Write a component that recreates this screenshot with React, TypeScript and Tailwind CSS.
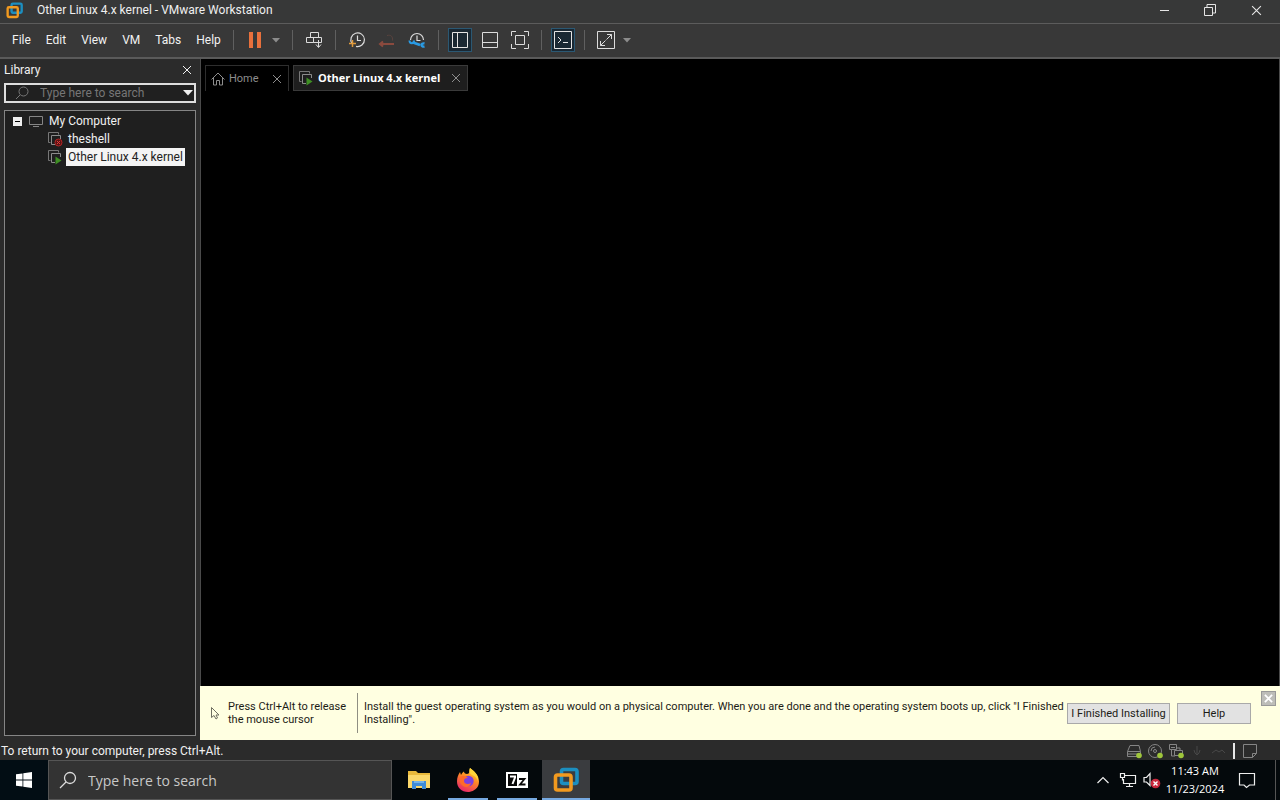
import type { ReactNode } from "react";

const ui = "font-['Roboto','Open_Sans',sans-serif]";

function VmwareLogo({ className }: { className: string }) {
  return (
    <svg viewBox="0 0 26 26" className={className} fill="none" strokeWidth="3.600" aria-hidden="true">
      <rect x="8.500" y="2.500" width="15.500" height="14" rx="2" stroke="#1c8fc0" />
      <rect x="2.500" y="8" width="15.500" height="15" rx="2" stroke="#f29a1f" />
      <path d="M8.500 11v3.500a2 2 0 0 0 2 2h4" stroke="#1c8fc0" strokeWidth="2" />
    </svg>
  );
}

function Separator() {
  return <div className="h-5 w-px shrink-0 bg-[#606060]" />;
}

function Tool({ label, active = false, children }: { label: string; active?: boolean; children: ReactNode }) {
  return (
    <button
      aria-label={label}
      className={
        active
          ? "flex size-6 shrink-0 items-center justify-center border border-[#2b5873] bg-[#1a2833] text-[#e4e4e4]"
          : "flex size-6 shrink-0 items-center justify-center text-[#dcdcdc]"
      }
    >
      {children}
    </button>
  );
}

function ToolGroup({ children }: { children: ReactNode }) {
  return <div className="flex shrink-0 items-center gap-1.5 px-[9px]">{children}</div>;
}

function Icon({ children }: { children: ReactNode }) {
  return (
    <svg viewBox="0 0 18 18" className="size-[18px] shrink-0" fill="none" stroke="currentColor" aria-hidden="true">
      {children}
    </svg>
  );
}

function Caret({ label }: { label: string }) {
  return (
    <button aria-label={label} className="-ml-1 flex h-6 w-3.5 items-center justify-center">
      <svg viewBox="0 0 8 5" className="h-[5px] w-2" fill="#8c8c8c" aria-hidden="true">
        <path d="M0 0h8L4 4.500z" />
      </svg>
    </button>
  );
}

function Cross({ className }: { className: string }) {
  return (
    <svg viewBox="0 0 10 10" className={className} fill="none" stroke="currentColor" aria-hidden="true">
      <path d="M1 1l8 8M9 1L1 9" />
    </svg>
  );
}

function MachineIcon({ running }: { running: boolean }) {
  return (
    <svg viewBox="0 0 16 16" className="size-4 shrink-0" fill="none" aria-hidden="true">
      <path d="M3.500 11.500h-2v-10h10v2" stroke="#777" />
      <path d="M8 13.500H4.500v-9h9V8" stroke="#8c8c8c" />
      {running ? (
        <path d="M8.500 7.500v8l6-4z" fill="#3f8f24" />
      ) : (
        <>
          <circle cx="11.500" cy="11.500" r="3.500" fill="#5a1414" stroke="#b32525" />
          <path d="M10 10l3 3M13 10l-3 3" stroke="#e23b3b" />
        </>
      )}
    </svg>
  );
}

function TitleBar() {
  return (
    <header className="flex h-6 shrink-0 items-start border-b border-[#5c5c5c] bg-[#373838]">
      <div className="flex h-5 min-w-0 flex-1 items-center gap-3.5 pl-1.5">
        <VmwareLogo className="size-[17px]" />
        <h1 className="truncate text-[12px] leading-4 text-[#f0f0f0]">Other Linux 4.x kernel - VMware Workstation</h1>
      </div>
      <div className="flex h-5 text-[#e6e6e6]">
        <button aria-label="Minimize" className="flex w-[46px] items-center justify-center">
          <span className="h-px w-[9px] bg-[#e6e6e6]" />
        </button>
        <button aria-label="Restore" className="flex w-[46px] items-center justify-center">
          <svg viewBox="0 0 12 12" className="size-3" fill="none" stroke="currentColor" aria-hidden="true">
            <path d="M.5 3.500h8v8h-8zM3 3V.5h8.500V9H9" />
          </svg>
        </button>
        <button aria-label="Close" className="flex w-[47px] items-center justify-center">
          <Cross className="size-[11px]" />
        </button>
      </div>
    </header>
  );
}

function Toolbar() {
  return (
    <div className="flex h-[35px] shrink-0 items-center border-b-2 border-[#5a5a5a] bg-[#383838] pb-px">
      <nav aria-label="Main menu" className="flex w-[233px] shrink-0 items-center gap-[15px] pl-3 text-[12px] leading-4 text-[#f2f2f2]">
        {["File", "Edit", "View", "VM", "Tabs", "Help"].map((name) => (
          <button key={name}>{name}</button>
        ))}
      </nav>
      <Separator />
      <ToolGroup>
        <Tool label="Suspend">
          <svg viewBox="0 0 14 16" className="h-4 w-3.5" fill="#e8703c" aria-hidden="true">
            <path d="M1 0h4v16H1zM9 0h4v16H9z" />
          </svg>
        </Tool>
        <Caret label="Power options" />
      </ToolGroup>
      <Separator />
      <ToolGroup>
        <Tool label="Send Ctrl+Alt+Del">
          <Icon>
            <path d="M5.500 1.500h8v5h-8zM1.500 6.500h7v5h-7zM8.500 6.500h8v5h-8zM13.500 9v7M11 13.500l2.500 3 2.500-3" />
          </Icon>
        </Tool>
      </ToolGroup>
      <Separator />
      <ToolGroup>
        <Tool label="Take snapshot">
          <Icon>
            <path d="M4 12.500A6.800 6.800 0 1 1 8 15.300M9.500 4.500v5H13" strokeWidth="1.200" />
            <path d="M4.500 9v7M1 12.500h7" stroke="#e09a3c" strokeWidth="1.500" />
          </Icon>
        </Tool>
        <Tool label="Revert snapshot">
          <Icon>
            <path d="M9 4.500c4-1 6 1 5.500 5" stroke="#59433e" />
            <path d="M5 10.500L2 13l3 2.500M2 13h14" stroke="#8a4a3e" strokeWidth="2" />
          </Icon>
        </Tool>
        <Tool label="Manage snapshots">
          <Icon>
            <path d="M2.500 9a6.500 6.500 0 1 1 13 0M9 4.500v5h3.500" strokeWidth="1.200" />
            <path d="M1.500 9.500c0 3.500 4.500 3.500 4.500 0" stroke="#2a9be4" strokeWidth="2" />
            <path d="M5 11.500l7 2.500M16.500 12.500c-4-1-4 4 0 3" stroke="#2a9be4" strokeWidth="2.400" />
          </Icon>
        </Tool>
      </ToolGroup>
      <Separator />
      <ToolGroup>
        <Tool label="Show library" active>
          <Icon>
            <path d="M1.500 1.500h15v15h-15zM6.500 1.500v15" />
          </Icon>
        </Tool>
        <Tool label="Show thumbnail bar">
          <Icon>
            <path d="M1.500 1.500h15v15h-15zM1.500 11.500h15" />
          </Icon>
        </Tool>
        <Tool label="Full screen">
          <Icon>
            <path d="M.5 5V.5H5M13 .5h4.500V5M17.500 13v4.500H13M5 17.500H.5V13M4.500 4.500h9v9h-9z" />
          </Icon>
        </Tool>
      </ToolGroup>
      <Separator />
      <ToolGroup>
        <Tool label="Console view" active>
          <Icon>
            <path d="M.5 .5h17v17H.5zM4 6l3 3-3 3M9 11.500h5" />
          </Icon>
        </Tool>
      </ToolGroup>
      <Separator />
      <ToolGroup>
        <Tool label="Stretch guest">
          <Icon>
            <path d="M.5 .5h17v17H.5z" />
            <path d="M10 3.500h4.500V8M14.500 3.500l-5 5M3.500 10v4.500H8M3.500 14.500l5-5" />
          </Icon>
        </Tool>
        <Caret label="Stretch options" />
      </ToolGroup>
    </div>
  );
}

function Library() {
  return (
    <aside className="flex w-[200px] shrink-0 flex-col bg-[#2b2b2b] px-1 pb-1 text-[12px] leading-[18px] text-[#f0f0f0]">
      <div className="flex h-6 items-center justify-between pr-1 pb-0.5">
        <h2>Library</h2>
        <button aria-label="Close library">
          <Cross className="size-[10px]" />
        </button>
      </div>
      <div className="flex h-5 shrink-0 items-center border-2 border-[#dedede] bg-[#202020] pl-2">
        <svg viewBox="0 0 16 16" className="size-4 shrink-0" fill="none" stroke="#777" aria-hidden="true">
          <circle cx="9.500" cy="6.500" r="4.500" />
          <path d="M6 10l-4 4" />
        </svg>
        <input
          aria-label="Search library"
          placeholder="Type here to search"
          className="ml-2.5 w-full min-w-0 bg-transparent outline-none placeholder:text-[#767676]"
        />
        <button aria-label="Search options" className="shrink-0 pr-px">
          <svg viewBox="0 0 10 6" className="h-[6px] w-2.5" fill="#f0f0f0" aria-hidden="true">
            <path d="M0 0h10L5 5.500z" />
          </svg>
        </button>
      </div>
      <ul className="mt-[7px] flex-1 border border-[#858585] bg-[#1f1f1f] pt-px">
        <li>
          <div className="flex h-[18px] items-center pl-2">
            <button aria-label="Collapse My Computer" className="flex size-[9px] items-center justify-center bg-[#eee]">
              <span className="h-px w-[5px] bg-black" />
            </button>
            <svg viewBox="0 0 16 14" className="ml-1.5 h-3.5 w-4" fill="none" stroke="#858585" aria-hidden="true">
              <path d="M1.500 2.500h13v8h-13zM5 12.500h6" />
            </svg>
            <span className="ml-[5px]">My Computer</span>
          </div>
          <ul>
            <li className="flex h-[18px] items-center gap-[3px] pl-[42px]">
              <MachineIcon running={false} />
              <button className="px-0.5">theshell</button>
            </li>
            <li className="flex h-[18px] items-center gap-[3px] pl-[42px]">
              <MachineIcon running />
              <button className="bg-[#f4f4f4] px-0.5 whitespace-nowrap text-[#222]">Other Linux 4.x kernel</button>
            </li>
          </ul>
        </li>
      </ul>
    </aside>
  );
}

function Tabs() {
  return (
    <div role="tablist" className="flex gap-1 pt-1.5 pl-1 font-['Open_Sans',sans-serif] text-[11px] leading-4">
      <div className="flex h-[26px] w-[84px] items-center border border-b-0 border-[#2e2e2e] pl-1 text-[#8d8d8d]">
        <svg viewBox="0 0 16 16" className="size-4" fill="none" stroke="#8d8d8d" aria-hidden="true">
          <path d="M1.500 8.500L8 2l6.500 6.500M3.500 7v7h3V9.500h3V14h3V7" />
        </svg>
        <button role="tab" className="ml-[3px] font-['Roboto',sans-serif]">Home</button>
        <button aria-label="Close Home" className="mr-1.5 ml-auto">
          <Cross className="size-[10px]" />
        </button>
      </div>
      <div className="flex h-[26px] w-[175px] items-center border border-[#3a3a3a] bg-[#1e1e1e] pl-1 text-[#8d8d8d]">
        <MachineIcon running />
        <button role="tab" aria-selected="true" className="ml-1 font-bold whitespace-nowrap text-white">
          Other Linux 4.x kernel
        </button>
        <button aria-label="Close Other Linux 4.x kernel" className="mr-1.5 ml-auto">
          <Cross className="size-[10px]" />
        </button>
      </div>
    </div>
  );
}

function InstallBanner() {
  return (
    <div className="flex h-[54px] shrink-0 items-center bg-[#ffffe1] pl-2.5 text-[11px] leading-[13px] text-[#1c1c16]">
      <svg viewBox="0 0 10 14" className="h-3.5 w-2.5 shrink-0" fill="none" stroke="#6e6e60" aria-hidden="true">
        <path d="M1.500 1.500v10l2.500-2 2 3.500 1.500-1-1.500-3h3z" />
      </svg>
      <p className="ml-2 w-[129px] shrink-0">
        Press Ctrl+Alt to release
        <br />
        the mouse cursor
      </p>
      <p className="flex min-h-10 flex-1 items-center border-l border-[#8f8f82] pl-1.5">
        Install the guest operating system as you would on a physical computer. When you are done and the operating system boots up, click "I Finished Installing".
      </p>
      <button className="h-[21px] w-[103px] shrink-0 border border-[#a9a9a9] bg-[#e2e2e2] whitespace-nowrap">I Finished Installing</button>
      <button className="ml-[7px] h-[21px] w-[74px] shrink-0 border border-[#a9a9a9] bg-[#e2e2e2]">Help</button>
      <button aria-label="Close message" className="mt-[5px] mr-1 ml-2.5 flex size-[15px] shrink-0 items-center justify-center self-start border border-[#999] bg-[#bdbdb8] text-white">
        <Cross className="size-[9px] stroke-2" />
      </button>
    </div>
  );
}

function StatusBar() {
  return (
    <footer className="flex h-5 shrink-0 items-center justify-between bg-[#2b2b2b] pr-[22px] pl-px text-[12px] leading-4 text-[#f0f0f0]">
      <p className="pt-0.5">To return to your computer, press Ctrl+Alt.</p>
      <div className="flex items-center gap-[5px] pt-0.5">
        <svg viewBox="0 0 16 16" className="size-4" fill="none" stroke="#858585" aria-label="Hard disk">
          <path d="M1.500 8.500L4 2.500h9l1.500 6M1.500 8.500h13v5h-13zM1.500 11h10" />
          <circle cx="13" cy="12.500" r="2.800" fill="#9fc63b" stroke="none" />
        </svg>
        <svg viewBox="0 0 16 16" className="size-4" fill="none" stroke="#858585" aria-label="CD/DVD">
          <circle cx="8" cy="8" r="6.500" />
          <circle cx="8" cy="8" r="1.500" />
          <path d="M4 8a4 4 0 0 1 4-4" />
          <circle cx="13" cy="12.500" r="2.800" fill="#9fc63b" stroke="none" />
        </svg>
        <svg viewBox="0 0 16 16" className="size-4" fill="none" stroke="#858585" aria-label="Network adapter">
          <path d="M1.500 1.500h7v5h-7zM6.500 7.500h8v5h-8zM3.500 7v6H7M3 4.500h4M9 5h3v2" />
          <circle cx="13" cy="12.500" r="2.800" fill="#9fc63b" stroke="none" />
        </svg>
        <svg viewBox="0 0 16 16" className="size-4" fill="none" stroke="#484848" aria-label="USB">
          <path d="M8 3v9M5 7l1 3 2 2 2-2 1-3" />
        </svg>
        <svg viewBox="0 0 16 16" className="size-4" fill="none" stroke="#484848" aria-label="Sound">
          <path d="M2 10l4-3 3 2 3-2 3 3" />
        </svg>
        <div className="ml-0.5 h-4 w-0.5 bg-[#e8e8e8]" />
        <svg viewBox="0 0 16 16" className="ml-0.5 size-4" fill="none" stroke="#858585" aria-label="Message log">
          <path d="M1.500 1.500h13v9l-4 4h-9zM14.500 10.500h-4v4" />
        </svg>
      </div>
    </footer>
  );
}

function TaskButton({ label, state, children }: { label: string; state: "pinned" | "open" | "active"; children: ReactNode }) {
  return (
    <button
      aria-label={label}
      className={
        state === "active"
          ? "flex h-10 w-12 flex-col items-center bg-[#3a3c3f]"
          : "flex h-10 w-12 flex-col items-center"
      }
    >
      <span className="flex flex-1 items-center pt-0.5">{children}</span>
      <span
        className={
          state === "active" ? "h-0.5 w-full bg-[#76a9e0]" : state === "open" ? "h-0.5 w-10 bg-[#76a9e0]" : "h-0.5 w-10"
        }
      />
    </button>
  );
}

function Taskbar() {
  return (
    <div className="flex h-10 shrink-0 items-center bg-[#04090c] font-['Open_Sans',sans-serif] text-white">
      <button aria-label="Start" className="flex h-10 w-12 shrink-0 items-center justify-center bg-[#020d14]">
        <svg viewBox="0 0 16 16" className="size-4" fill="#fff" aria-hidden="true">
          <path d="M0 2.300l6.500-.9v6.200H0zM7.300 1.300L16 0v7.600H7.300zM0 8.400h6.500v6.200L0 13.700zM7.300 8.400H16V16l-8.700-1.300z" />
        </svg>
      </button>
      <div className="flex h-10 w-[344px] shrink-0 items-center border border-[#555] bg-[#333] pl-2.5">
        <svg viewBox="0 0 18 18" className="size-[18px] shrink-0" fill="none" stroke="#dcdcdc" strokeWidth="1.300" aria-hidden="true">
          <circle cx="11" cy="7" r="5.500" />
          <path d="M7 11l-6 6" />
        </svg>
        <input
          aria-label="Search Windows"
          placeholder="Type here to search"
          className="ml-[11px] w-full min-w-0 bg-transparent pt-0.5 text-[14px] leading-5 outline-none placeholder:text-[#c8c8c8]"
        />
      </div>
      <div className="flex gap-px pl-[3px]">
        <TaskButton label="File Explorer" state="pinned">
          <svg viewBox="0 0 24 20" className="h-5 w-6" aria-hidden="true">
            <path d="M1 1h8l2 2h12v15H1z" fill="#e9b93c" />
            <path d="M1 5h22v13H1z" fill="#fbd86b" />
            <path d="M5 11h14v8h-4v-3H9v3H5z" fill="#3f8cd8" />
            <path d="M7 11h10v2H7z" fill="#74b3ea" />
          </svg>
        </TaskButton>
        <TaskButton label="Firefox" state="open">
          <svg viewBox="0 0 24 24" className="size-6" aria-hidden="true">
            <defs>
              <linearGradient id="fox" x1="0.800" y1="0" x2="0.300" y2="1">
                <stop offset="0" stopColor="#ffe23e" />
                <stop offset="0.450" stopColor="#ff8a24" />
                <stop offset="1" stopColor="#e8246c" />
              </linearGradient>
            </defs>
            <path d="M14 0c4 3 9 7 9 13.500A10.500 10.500 0 0 1 12 24C5.500 24 1 19.500 1 13.500 1 9.500 2 7 4 4l1 3c1-2 2-3 3-3.500C8 5 9 6 11 6c3 0 2-3 3-6z" fill="url(#fox)" />
            <circle cx="12.500" cy="13" r="5.200" fill="#7b3fe0" />
            <path d="M4 9c3-2 6-1 8 1-3 0-4 1-4 3 0 3 4 4 7 2-1 4-5 5-8 3s-4-5-3-9z" fill="#ff6a2a" />
            <path d="M14 0c4 3 9 7 8 13-1-3-3-5-6-6-3-2-3-4-2-7z" fill="#ffd43a" />
          </svg>
        </TaskButton>
        <TaskButton label="7-Zip" state="open">
          <svg viewBox="0 0 22 16" className="h-4 w-[22px]" fill="none" aria-hidden="true">
            <path d="M0 0h22v16H0z" fill="#fff" />
            <path d="M2 2h9v12H2z" fill="#080808" />
            <path d="M4 4.500h5v1L6.500 12" stroke="#fff" strokeWidth="2" />
            <path d="M13 7h5.500L14 12.500h5.500" stroke="#080808" strokeWidth="1.800" />
          </svg>
        </TaskButton>
        <TaskButton label="VMware Workstation" state="active">
          <VmwareLogo className="size-[26px]" />
        </TaskButton>
      </div>
      <div className="mr-1 ml-auto flex h-10 items-center border-r border-[#555] pr-[19px]">
        <button aria-label="Show hidden icons">
          <svg viewBox="0 0 12 8" className="h-2 w-3" fill="none" stroke="#eee" strokeWidth="1.200" aria-hidden="true">
            <path d="M.5 7L6 1.500 11.500 7" />
          </svg>
        </button>
        <button aria-label="Network" className="ml-2.5">
          <svg viewBox="0 0 18 16" className="h-4 w-[18px]" fill="none" stroke="#eee" strokeWidth="1.200" aria-hidden="true">
            <path d="M6 3.500h10.500v8H4.500V7M10.500 11.500v3M7 14.500h7M1.500 1.500h4v4h-4zM3.500 5.500v3" />
          </svg>
        </button>
        <button aria-label="Volume muted" className="ml-1.5">
          <svg viewBox="0 0 18 18" className="size-[18px]" fill="none" aria-hidden="true">
            <path d="M1 6.500h2.500L7 2.500v12L3.500 11H1z" stroke="#eee" strokeWidth="1.200" />
            <circle cx="12.500" cy="12.500" r="4.800" fill="#c8283c" />
            <path d="M10.500 10.500l4 4M14.500 10.500l-4 4" stroke="#fff" strokeWidth="1.400" />
          </svg>
        </button>
        <div className="ml-1 w-[60px] text-center text-[11px] leading-[18px] whitespace-nowrap">
          <div>11:43 AM</div>
          <div>11/23/2024</div>
        </div>
        <button aria-label="Notifications" className="ml-[13px]">
          <svg viewBox="0 0 18 18" className="size-[18px]" fill="none" stroke="#eee" strokeWidth="1.200" aria-hidden="true">
            <path d="M1.500 2.500h15v11.500h-5L8.500 16.500 6 14H1.500z" />
          </svg>
        </button>
      </div>
    </div>
  );
}

export default function App() {
  return (
    <div className={`flex h-screen flex-col overflow-hidden bg-[#2b2b2b] ${ui}`}>
      <TitleBar />
      <Toolbar />
      <div className="flex min-h-0 flex-1">
        <Library />
        <main className="flex min-w-0 flex-1 flex-col bg-black">
          <div className="flex-1 border-x border-[#4a4a4a]">
            <Tabs />
          </div>
          <InstallBanner />
        </main>
      </div>
      <StatusBar />
      <Taskbar />
    </div>
  );
}
